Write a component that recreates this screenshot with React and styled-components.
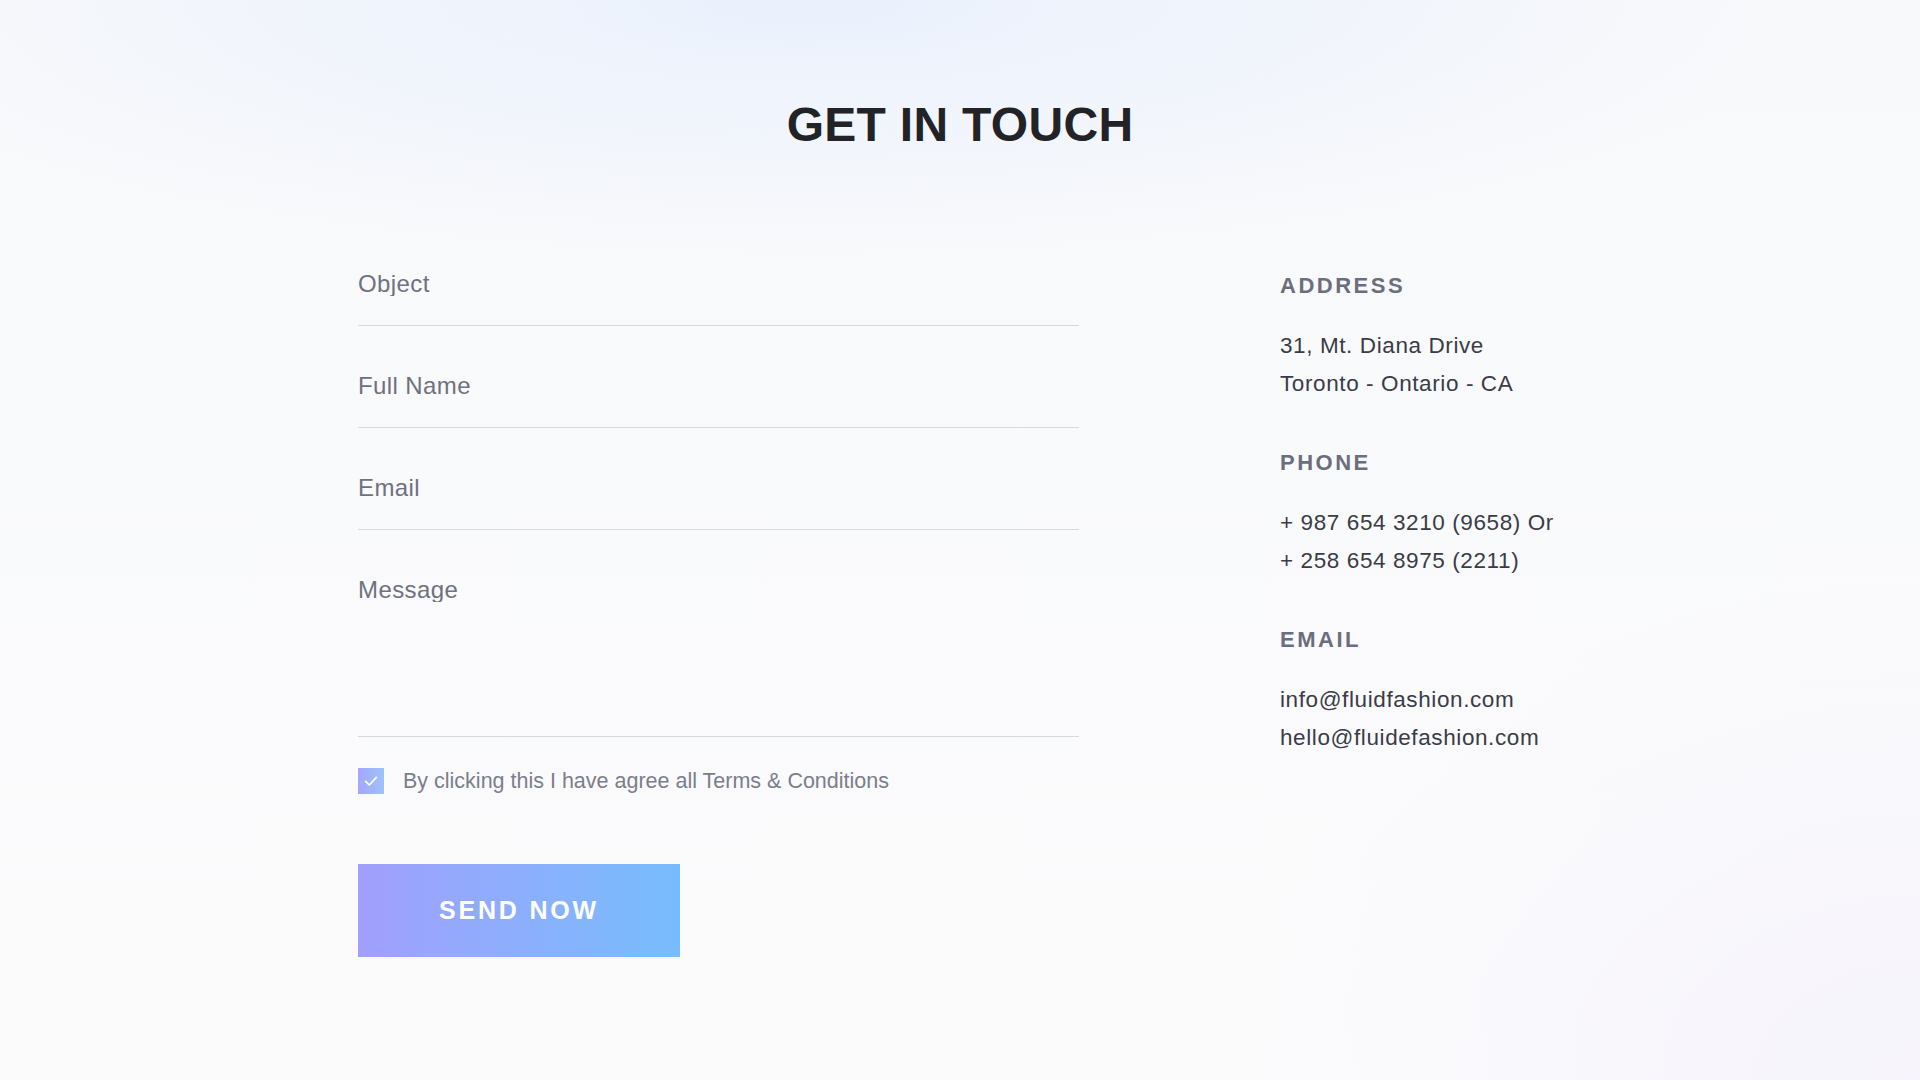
import React from 'react';
import styled, { createGlobalStyle } from 'styled-components';

const contacts = [
  { title: 'Address', lines: ['31, Mt. Diana Drive', 'Toronto - Ontario - CA'] },
  { title: 'Phone', lines: ['+ 987 654 3210 (9658) Or', '+ 258 654 8975 (2211)'] },
  { title: 'Email', lines: ['info@fluidfashion.com', 'hello@fluidefashion.com'] },
];

const App = () => (
  <Page>
    <GlobalStyle />
    <Title>GET IN TOUCH</Title>
    <Layout>
      <Form onSubmit={(e) => e.preventDefault()}>
        <Field>
          <Input placeholder="Object" />
        </Field>
        <Field>
          <Input placeholder="Full Name" />
        </Field>
        <Field>
          <Input placeholder="Email" />
        </Field>
        <Field tall>
          <TextArea placeholder="Message" />
        </Field>
        <Agree>
          <Box>
            <svg width="16" height="16" viewBox="0 0 24 24" fill="none" stroke="#fff" strokeWidth="2.6" strokeLinecap="round" strokeLinejoin="round">
              <polyline points="4 12.5 9.5 18 20 6.5" />
            </svg>
          </Box>
          <span>By clicking this I have agree all Terms &amp; Conditions</span>
        </Agree>
        <SendButton type="submit">SEND NOW</SendButton>
      </Form>
      <Info>
        {contacts.map((c) => (
          <Section key={c.title}>
            <SectionTitle>{c.title}</SectionTitle>
            {c.lines.map((l) => (
              <Line key={l}>{l}</Line>
            ))}
          </Section>
        ))}
      </Info>
    </Layout>
  </Page>
);

const GlobalStyle = createGlobalStyle`
  * {
    box-sizing: border-box;
  }
  body {
    margin: 0;
    font-family: "Liberation Sans", Arial, sans-serif;
  }
`;

const Page = styled.div`
  width: 1920px;
  height: 1080px;
  overflow: hidden;
  padding-top: 101px;
  background:
    radial-gradient(ellipse 1000px 260px at 42% 0%, rgba(228, 237, 253, 0.7), rgba(228, 237, 253, 0) 100%),
    radial-gradient(ellipse 700px 500px at 100% 100%, rgba(246, 243, 252, 0.9), rgba(246, 243, 252, 0) 100%),
    linear-gradient(180deg, #f8f9fb 0%, #fbfbfc 100%);
`;

const Title = styled.h1`
  margin: 0;
  font-size: 48px;
  line-height: 48px;
  font-weight: 700;
  letter-spacing: 0.3px;
  text-align: center;
  color: #212327;
`;

const Layout = styled.div`
  width: 1204px;
  margin: 75px auto 0;
  display: grid;
  grid-template-columns: 721px 1fr;
  column-gap: 201px;
`;

const Form = styled.form`
  display: flex;
  flex-direction: column;
  align-items: flex-start;
`;

const Field = styled.div`
  width: 100%;
  padding: 48px 0 ${(p) => (p.tall ? '134px' : '29px')};
  border-bottom: 1px solid #d7d9e0;
`;

const inputText = `
  display: block;
  width: 100%;
  border: 0;
  padding: 0;
  margin: 0;
  outline: none;
  background: transparent;
  font-family: "Liberation Sans", Arial, sans-serif;
  font-size: 24px;
  line-height: 24px;
  letter-spacing: 0.4px;
  color: #3b3d48;
  &::placeholder {
    color: #6f7180;
    opacity: 1;
  }
`;

const Input = styled.input`
  ${inputText}
  height: 24px;
`;

const TextArea = styled.textarea`
  ${inputText}
  height: 24px;
  resize: none;
  overflow: hidden;
`;

const Agree = styled.label`
  margin-top: 31px;
  display: flex;
  align-items: center;
  gap: 19px;
  font-size: 21.5px;
  color: #7b7e8c;
`;

const Box = styled.span`
  width: 26px;
  height: 26px;
  display: flex;
  align-items: center;
  justify-content: center;
  background: linear-gradient(90deg, #a4a6fb, #9dc3fb);
`;

const SendButton = styled.button`
  margin-top: 70px;
  width: 322px;
  height: 93px;
  border: 0;
  cursor: pointer;
  background: linear-gradient(90deg, #a19ffc 0%, #77bdfd 100%);
  color: #fff;
  font-family: "Liberation Sans", Arial, sans-serif;
  font-size: 25px;
  font-weight: 700;
  letter-spacing: 2.8px;
`;

const Info = styled.div`
  padding-top: 51px;
  display: flex;
  flex-direction: column;
  gap: 49px;
`;

const Section = styled.div`
  display: flex;
  flex-direction: column;
`;

const SectionTitle = styled.h3`
  margin: 0 0 30px;
  font-size: 22px;
  line-height: 22px;
  font-weight: 700;
  letter-spacing: 2.5px;
  text-transform: uppercase;
  color: #6b6e7e;
`;

const Line = styled.p`
  margin: 0;
  font-size: 22.5px;
  line-height: 38px;
  letter-spacing: 0.6px;
  color: #3a3c47;
`;

export default App;
